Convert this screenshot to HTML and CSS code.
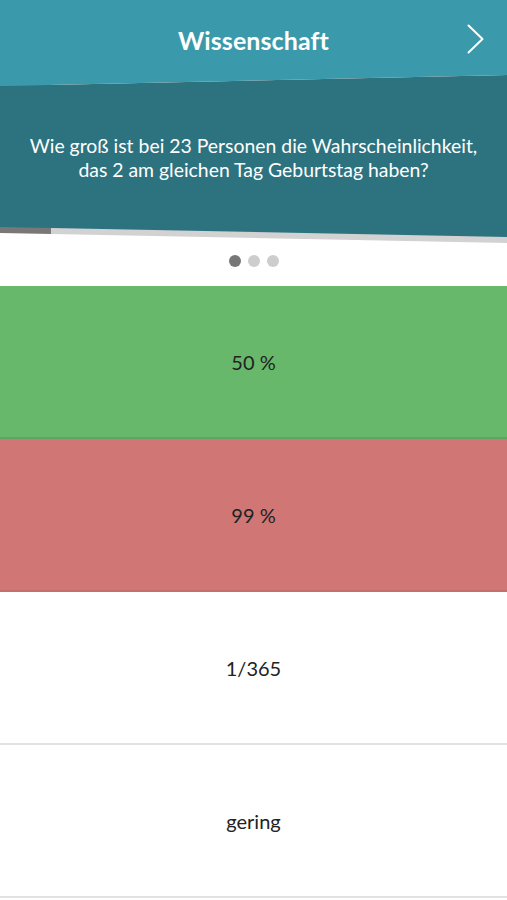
FILE: index.html
```html
<!DOCTYPE html>
<html lang="de">
<head>
<meta charset="utf-8">
<title>Wissenschaft</title>
<link rel="stylesheet" href="styles.css">
</head>
<body>
<div class="screen">
  <header class="hero">
    <div class="bar">
      <h1 class="title">Wissenschaft</h1>
      <svg class="next" width="18" height="30" viewBox="0 0 18 30" aria-hidden="true">
        <path d="M1.5 1.5 L15.5 15 L1.5 28.5" fill="none" stroke="#fff" stroke-width="2" stroke-linecap="round" stroke-linejoin="round"/>
      </svg>
    </div>
    <div class="question-wrap">
      <div class="question">
        <p>Wie groß ist bei 23 Personen die Wahrscheinlichkeit,<br>das 2 am gleichen Tag Geburtstag haben?</p>
      </div>
    </div>
  </header>
  <div class="dots">
    <span class="dot active"></span>
    <span class="dot"></span>
    <span class="dot"></span>
  </div>
  <ul class="answers">
    <li class="answer correct">50 %</li>
    <li class="answer wrong">99 %</li>
    <li class="answer">1/365</li>
    <li class="answer">gering</li>
  </ul>
</div>
</body>
</html>
```

FILE: styles.css
```css
* { box-sizing: border-box; }
html, body { margin: 0; padding: 0; }
body {
  background: #fff;
  font-family: Lato, "Open Sans", "Liberation Sans", sans-serif;
  width: 507px;
  height: 900px;
  overflow: hidden;
}
.screen { display: flex; flex-direction: column; }

.hero {
  display: flex;
  flex-direction: column;
  background: linear-gradient(to bottom, #3a9aab 0 100px, #fff 100px);
}
.bar {
  height: 75px;
  display: flex;
  align-items: center;
  justify-content: center;
  position: relative;
  padding-top: 4px;
}
.title {
  margin: 0;
  color: #fff;
  font-weight: 700;
  font-size: 25px;
  letter-spacing: 0.1px;
}
.next {
  position: absolute;
  right: 22px;
  top: 24px;
}
.question-wrap {
  height: 170px;
  background: linear-gradient(to right, #787878 0 51px, #d2d2d2 51px);
  clip-path: polygon(0 11px, 100% 0, 100% 168px, 0 158px);
}
.question {
  height: 100%;
  background: #2d737f;
  clip-path: polygon(0 11px, 100% 0, 100% 162px, 0 152px);
  display: flex;
  align-items: center;
  justify-content: center;
  padding-bottom: 4px;
}
.question p {
  margin: 0;
  color: #fff;
  font-size: 19.4px;
  line-height: 24px;
  text-align: center;
  white-space: nowrap;
}

.dots {
  height: 41px;
  display: flex;
  justify-content: center;
  align-items: center;
  gap: 7px;
  padding-bottom: 10px;
}
.dot {
  width: 12px;
  height: 12px;
  border-radius: 50%;
  background: #cdcdcd;
}
.dot.active { background: #777; }

.answers {
  list-style: none;
  margin: 0;
  padding: 0;
  display: flex;
  flex-direction: column;
}
.answer {
  height: 153px;
  display: flex;
  align-items: center;
  justify-content: center;
  font-size: 20px;
  color: #222;
  border-bottom: 2px solid #e2e2e2;
}
.answer.correct {
  background: #67b86b;
  border-bottom-color: #5ea562;
}
.answer.wrong {
  background: #d07674;
  border-bottom-color: #c56f6d;
}
```
